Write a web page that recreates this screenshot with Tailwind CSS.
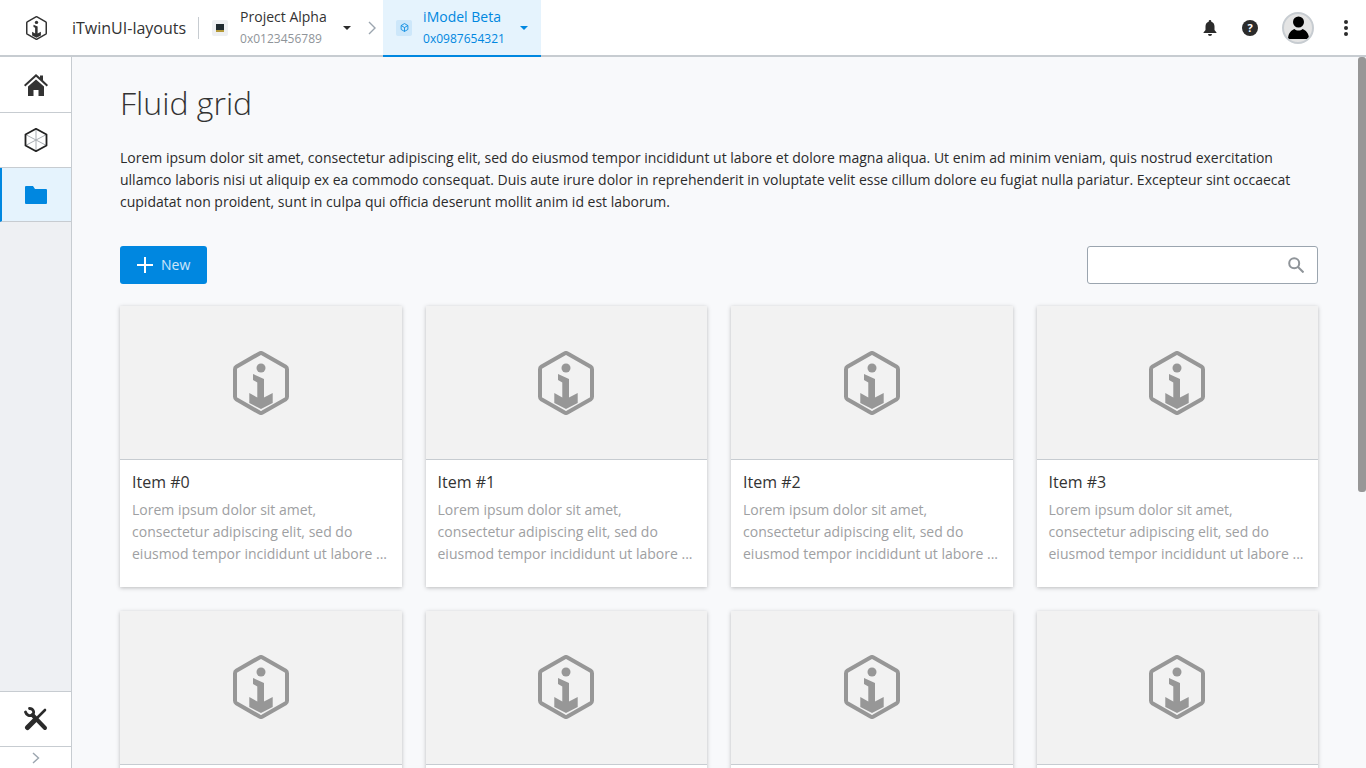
<!DOCTYPE html>
<html lang="en">
<head>
<meta charset="UTF-8">
<title>iTwinUI-layouts</title>
<script src="https://cdn.jsdelivr.net/npm/@tailwindcss/browser@4"></script>
</head>
<body class="h-[768px] w-[1366px] overflow-hidden bg-[#f8f9fb] font-['Open_Sans',sans-serif] text-[14px] text-[#2b2b2b]">

<!-- shared logo -->
<svg class="hidden">
  <symbol id="logo" viewBox="0 0 56 64">
    <path d="M26.500 2.400 Q28 1.600 29.500 2.400 L52.700 15.800 Q54 16.600 54 18.200 V45.800 Q54 47.400 52.700 48.200 L29.500 61.600 Q28 62.400 26.500 61.600 L3.300 48.200 Q2 47.400 2 45.800 V18.200 Q2 16.600 3.300 15.800 Z" fill="none" stroke="currentColor" stroke-width="4"/>
    <circle cx="28" cy="17" r="4.500" fill="currentColor"/>
    <path d="M20 23 L31 28 V46.500 L39.700 42 V52 L28 58 L16.300 52 V42 L24.300 46.500 V31.500 L20 29 Z" fill="currentColor"/>
  </symbol>
</svg>

<!-- header -->
<header class="flex h-[57px] items-stretch border-b-2 border-[#c7ccd1] bg-white">
  <div class="flex w-[72px] items-center justify-center">
    <svg class="h-[24px] w-[21px] text-[#333]"><use href="#logo"/></svg>
  </div>
  <div class="flex items-center text-[16px] text-[#333]">iTwinUI-layouts</div>
  <div class="ml-[12px] mt-[17px] h-[22px] w-px bg-[#c7ccd1]"></div>
  <div class="ml-[13px] flex items-center">
    <div class="flex h-[16px] w-[16px] items-center justify-center rounded-[2px] bg-[#eef0f3]">
      <div class="h-[8px] w-[8px] border-b-2 border-[#b59b3c] bg-[#1f2a30]"></div>
    </div>
    <div class="ml-[12px] flex w-[103px] flex-col">
      <span class="text-[14px] leading-[20px] text-[#333]">Project Alpha</span>
      <span class="mt-[2px] text-[12px] leading-[20px] text-[#8f9499]">0x0123456789</span>
    </div>
    <svg class="h-[4px] w-[8px] text-[#2b2b2b]" viewBox="0 0 8 4"><path d="M0 0h8L4 4z" fill="currentColor"/></svg>
    <svg class="ml-[17px] h-[14px] w-[8px]" viewBox="0 0 8 14" fill="none" stroke="#9ba5af" stroke-width="1.4"><path d="M1 1l6 6-6 6"/></svg>
  </div>
  <div class="-mb-[2px] ml-[7px] flex w-[158px] items-center border-b-2 border-[#0087e0] bg-[#e5f3fd] pl-[13px]">
    <div class="flex h-[16px] w-[16px] items-center justify-center rounded-[2px] bg-[#cde7fa]">
      <svg class="h-[9px] w-[9px]" viewBox="0 0 16 16" fill="none" stroke="#0087e0" stroke-width="1.5"><path d="M8 1l6 3.500v7L8 15l-6-3.500v-7zM8 8v7M2 4.500 8 8l6-3.500"/></svg>
    </div>
    <div class="ml-[11px] flex w-[97px] flex-col">
      <span class="text-[14px] leading-[20px] text-[#0087e0]">iModel Beta</span>
      <span class="mt-[2px] text-[12px] leading-[20px] text-[#0087e0]">0x0987654321</span>
    </div>
    <svg class="h-[4px] w-[8px]" viewBox="0 0 8 4"><path d="M0 0h8L4 4z" fill="#0087e0"/></svg>
  </div>
  <div class="ml-auto flex items-center">
    <svg class="h-[16px] w-[14px] text-[#2b2b2b]" viewBox="0 0 14 16" fill="currentColor"><path d="M7 0a1.300 1.300 0 0 1 1.300 1.300v.4C10.600 2.300 11.500 4.300 11.500 6.500V10l2 2.500v.5H.5v-.5l2-2.500V6.500c0-2.200.9-4.200 3.200-4.800v-.4A1.300 1.300 0 0 1 7 0zM5 14h4a2 2 0 0 1-4 0z"/></svg>
    <div class="ml-[25px] flex h-[16px] w-[16px] items-center justify-center rounded-full bg-[#2b2b2b] text-[11px] leading-none font-bold text-white">?</div>
    <div class="ml-[24px] flex h-[32px] w-[32px] items-end justify-center overflow-hidden rounded-full border-2 border-[#c7ccd1] bg-[#e4e4e4]">
      <svg class="mb-[3px] h-[23px] w-[21px]" viewBox="0 0 21 23" fill="#000"><circle cx="10.500" cy="6" r="5.500"/><path d="M0 23c0-6 3.500-9 6.500-10C7.500 14 9 14.500 10.500 14.500s3-.5 4-1.500c3 1 6.500 4 6.500 10z"/></svg>
    </div>
    <div class="mr-[18px] ml-[30px] flex h-[16px] w-[4px] flex-col justify-between">
      <div class="h-[4px] w-[4px] rounded-full bg-[#2b2b2b]"></div>
      <div class="h-[4px] w-[4px] rounded-full bg-[#2b2b2b]"></div>
      <div class="h-[4px] w-[4px] rounded-full bg-[#2b2b2b]"></div>
    </div>
  </div>
</header>

<div class="relative flex h-[711px] overflow-hidden">
  <!-- side nav -->
  <nav class="flex w-[72px] shrink-0 flex-col border-r border-[#c7ccd1] bg-[#eef0f3]">
    <a class="flex h-[56px] items-center justify-center border-b border-[#c7ccd1] bg-white">
      <svg class="h-[22px] w-[24px] text-[#333]" viewBox="0 0 24 22" fill="currentColor"><path d="M12 0l4 3.600V1.500h3v4.800L24 11l-1.300 1.400L12 2.800 1.300 12.400 0 11zM4 12.500l8-7 8 7V22h-5.500v-6h-5v6H4z"/></svg>
    </a>
    <a class="flex h-[55px] items-center justify-center border-b border-[#c7ccd1] bg-white">
      <svg class="h-[24px] w-[24px]" viewBox="0 0 24 24" fill="none" stroke-linejoin="round">
        <path d="M12 12V23M12 12 1.500 6.500M12 12l10.500-5.500M12 12V1M12 12 1.500 17.500M12 12l10.500 5.500" stroke="#a9aeb3" stroke-width="1"/>
        <path d="M12 .8l10.500 5.700v11L12 23.200 1.500 17.500v-11z" stroke="#222" stroke-width="1.800"/>
      </svg>
    </a>
    <a class="flex h-[54px] items-center justify-center border-b border-l-2 border-[#c7ccd1] border-l-[#0087e0] bg-[#e5f3fd] pr-[2px]">
      <svg class="h-[18px] w-[22px]" viewBox="0 0 22 18" fill="#0087e0"><path d="M0 1a1 1 0 0 1 1-1h7l2 3h11a1 1 0 0 1 1 1v13a1 1 0 0 1-1 1H1a1 1 0 0 1-1-1z"/></svg>
    </a>
    <a class="mt-auto flex h-[56px] items-center justify-center border-y border-[#c7ccd1] bg-white">
      <svg class="h-[24px] w-[24px]" viewBox="0 0 24 24" fill="none" stroke="#2b2b2b" stroke-linecap="round">
        <path d="M5.500 1.500C9 1.500 11 5 8.500 8 6 9.500 2.500 8.500 1.500 5" stroke-width="2.800"/>
        <path d="M8.500 8 21 21" stroke-width="4"/>
        <path d="M3.500 20.500 11 13" stroke-width="5"/>
        <path d="M11 13 21 3" stroke-width="2.600"/>
      </svg>
    </a>
    <a class="flex h-[21px] items-center justify-center bg-white">
      <svg class="h-[12px] w-[8px]" viewBox="0 0 8 12" fill="none" stroke="#9ba5af" stroke-width="1.400"><path d="M1 1l5.500 5L1 11"/></svg>
    </a>
  </nav>

  <!-- page -->
  <main class="min-w-0 flex-1 overflow-hidden pr-[48px] pl-[48px]">
    <h1 class="mt-[26px] text-[32px] leading-[40px] font-light text-[#333]">Fluid grid</h1>
    <p class="mt-[24px] text-[14px] leading-[22px]">Lorem ipsum dolor sit amet, consectetur adipiscing elit, sed do eiusmod tempor incididunt ut labore et dolore magna aliqua. Ut enim ad minim veniam, quis nostrud exercitation ullamco laboris nisi ut aliquip ex ea commodo consequat. Duis aute irure dolor in reprehenderit in voluptate velit esse cillum dolore eu fugiat nulla pariatur. Excepteur sint occaecat cupidatat non proident, sunt in culpa qui officia deserunt mollit anim id est laborum.</p>

    <div class="mt-[33px] flex items-center justify-between">
      <button class="flex h-[38px] w-[87px] items-center rounded-[3px] bg-[#0087e0] pl-[17px] text-white">
        <svg class="h-[16px] w-[16px]" viewBox="0 0 16 16" fill="none" stroke="#fff" stroke-width="2"><path d="M8 0v16M0 8h16"/></svg>
        <span class="-mt-[2px] ml-[8px] text-[14px] text-white/80">New</span>
      </button>
      <div class="flex h-[38px] w-[231px] items-center justify-end rounded-[3px] border border-[#9ba5af] bg-white pr-[13px]">
        <svg class="h-[16px] w-[16px]" viewBox="0 0 16 16" fill="none" stroke="#8f9499" stroke-width="2"><circle cx="6.200" cy="6.200" r="5"/><path d="M10 10l5.500 5.500"/></svg>
      </div>
    </div>

    <div class="mt-[22px] grid grid-cols-4 gap-x-[24px] gap-y-[24px]">
      <div class="h-[281px] bg-white shadow-[0_1px_4px_rgba(0,0,0,0.25)]">
        <div class="flex h-[154px] items-center justify-center border-b border-[#c7ccd1] bg-[#f2f2f2]"><svg class="h-[64px] w-[56px] text-[#979797]"><use href="#logo"/></svg></div>
        <div class="px-[12px] pt-[10px]">
          <div class="text-[16px] leading-[24px] text-[#333]">Item #0</div>
          <div class="mt-[5px] text-[14px] leading-[22px] text-[#9ea0a2]">Lorem ipsum dolor sit amet, consectetur adipiscing elit, sed do eiusmod tempor incididunt ut labore ...</div>
        </div>
      </div>
      <div class="h-[281px] bg-white shadow-[0_1px_4px_rgba(0,0,0,0.25)]">
        <div class="flex h-[154px] items-center justify-center border-b border-[#c7ccd1] bg-[#f2f2f2]"><svg class="h-[64px] w-[56px] text-[#979797]"><use href="#logo"/></svg></div>
        <div class="px-[12px] pt-[10px]">
          <div class="text-[16px] leading-[24px] text-[#333]">Item #1</div>
          <div class="mt-[5px] text-[14px] leading-[22px] text-[#9ea0a2]">Lorem ipsum dolor sit amet, consectetur adipiscing elit, sed do eiusmod tempor incididunt ut labore ...</div>
        </div>
      </div>
      <div class="h-[281px] bg-white shadow-[0_1px_4px_rgba(0,0,0,0.25)]">
        <div class="flex h-[154px] items-center justify-center border-b border-[#c7ccd1] bg-[#f2f2f2]"><svg class="h-[64px] w-[56px] text-[#979797]"><use href="#logo"/></svg></div>
        <div class="px-[12px] pt-[10px]">
          <div class="text-[16px] leading-[24px] text-[#333]">Item #2</div>
          <div class="mt-[5px] text-[14px] leading-[22px] text-[#9ea0a2]">Lorem ipsum dolor sit amet, consectetur adipiscing elit, sed do eiusmod tempor incididunt ut labore ...</div>
        </div>
      </div>
      <div class="h-[281px] bg-white shadow-[0_1px_4px_rgba(0,0,0,0.25)]">
        <div class="flex h-[154px] items-center justify-center border-b border-[#c7ccd1] bg-[#f2f2f2]"><svg class="h-[64px] w-[56px] text-[#979797]"><use href="#logo"/></svg></div>
        <div class="px-[12px] pt-[10px]">
          <div class="text-[16px] leading-[24px] text-[#333]">Item #3</div>
          <div class="mt-[5px] text-[14px] leading-[22px] text-[#9ea0a2]">Lorem ipsum dolor sit amet, consectetur adipiscing elit, sed do eiusmod tempor incididunt ut labore ...</div>
        </div>
      </div>
      <div class="h-[281px] bg-white shadow-[0_1px_4px_rgba(0,0,0,0.25)]">
        <div class="flex h-[154px] items-center justify-center border-b border-[#c7ccd1] bg-[#f2f2f2]"><svg class="-mt-[2px] h-[64px] w-[56px] text-[#979797]"><use href="#logo"/></svg></div>
      </div>
      <div class="h-[281px] bg-white shadow-[0_1px_4px_rgba(0,0,0,0.25)]">
        <div class="flex h-[154px] items-center justify-center border-b border-[#c7ccd1] bg-[#f2f2f2]"><svg class="-mt-[2px] h-[64px] w-[56px] text-[#979797]"><use href="#logo"/></svg></div>
      </div>
      <div class="h-[281px] bg-white shadow-[0_1px_4px_rgba(0,0,0,0.25)]">
        <div class="flex h-[154px] items-center justify-center border-b border-[#c7ccd1] bg-[#f2f2f2]"><svg class="-mt-[2px] h-[64px] w-[56px] text-[#979797]"><use href="#logo"/></svg></div>
      </div>
      <div class="h-[281px] bg-white shadow-[0_1px_4px_rgba(0,0,0,0.25)]">
        <div class="flex h-[154px] items-center justify-center border-b border-[#c7ccd1] bg-[#f2f2f2]"><svg class="-mt-[2px] h-[64px] w-[56px] text-[#979797]"><use href="#logo"/></svg></div>
      </div>
    </div>
  </main>

  <!-- scrollbar thumb -->
  <div class="absolute top-0 right-0 h-[435px] w-[8px] rounded-[3px] bg-[#979797]"></div>
</div>
</body>
</html>
